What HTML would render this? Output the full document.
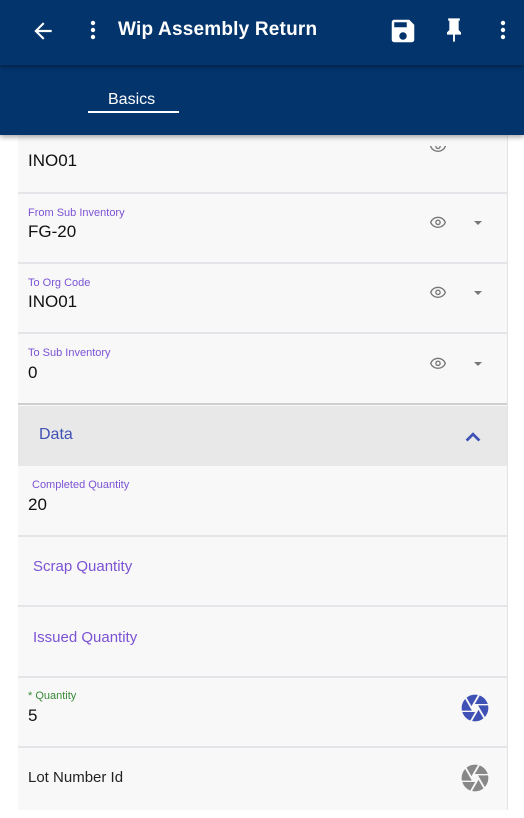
<!DOCTYPE html>
<html><head><style>
*{margin:0;padding:0;box-sizing:border-box}
body{width:524px;height:810px;overflow:hidden;background:#fff;font-family:"Liberation Sans",sans-serif;position:relative}
.top{position:absolute;left:0;top:0;width:524px;height:65px;background:#03346c;box-shadow:0 2px 4px rgba(0,0,0,.35);z-index:3}
.tabs{position:absolute;left:0;top:65px;width:524px;height:70px;background:#03346c;box-shadow:0 2px 5px rgba(0,0,0,.35);z-index:2}
.title{position:absolute;left:118px;top:19px;color:#fff;font-size:19px;font-weight:bold;letter-spacing:.2px}
.card{position:absolute;left:18px;top:135px;width:490px;height:675px;background:#f8f8f8;border-right:1px solid #e4e4e4}
.row{position:absolute;left:0;width:489px;border-bottom:2px solid #e3e5e8}
.lab{position:absolute;left:10px;font-size:11px;color:#7b52d4}
.val{position:absolute;left:10px;font-size:17px;color:#111}
.eye{position:absolute;left:410px}
.dd{position:absolute;left:456px;width:0;height:0;border-left:4px solid transparent;border-right:4px solid transparent;border-top:4px solid #777}
</style></head><body>
<div class="top">
<svg style="position:absolute;left:30px;top:18px" width="26" height="26" viewBox="0 0 24 24"><path d="M20 11H7.8l5.6-5.6L12 4l-8 8 8 8 1.4-1.4L7.8 13H20z" fill="#fff"/></svg>
<svg style="position:absolute;left:81px;top:18px" width="24" height="24" viewBox="0 0 24 24"><circle cx="12" cy="5" r="2.2" fill="#fff"/><circle cx="12" cy="12" r="2.2" fill="#fff"/><circle cx="12" cy="19" r="2.2" fill="#fff"/></svg>
<div class="title">Wip Assembly Return</div>
<svg style="position:absolute;left:388px;top:16px" width="30" height="30" viewBox="0 0 24 24"><path d="M17 3H5a2 2 0 0 0-2 2v14a2 2 0 0 0 2 2h14a2 2 0 0 0 2-2V7l-4-4zm-5 16a3 3 0 1 1 0-6 3 3 0 0 1 0 6zm3-10H5V5h10v4z" fill="#fff"/></svg>
<svg style="position:absolute;left:440px;top:15px" width="28" height="30" viewBox="0 0 24 24"><path d="M16 4v8l2 2v2h-5.2v6h-1.6v-6H6v-2l2-2V4H7V2h10v2z" fill="#fff"/></svg>
<svg style="position:absolute;left:491px;top:18px" width="24" height="24" viewBox="0 0 24 24"><circle cx="12" cy="5" r="2.2" fill="#fff"/><circle cx="12" cy="12" r="2.2" fill="#fff"/><circle cx="12" cy="19" r="2.2" fill="#fff"/></svg>
</div>
<div class="tabs">
<div style="position:absolute;left:108px;top:26px;color:#fff;font-size:16px">Basics</div>
<div style="position:absolute;left:88px;top:46px;width:91px;height:2px;background:#fff"></div>
</div>
<div class="card">
<div class="row" style="top:0;height:59px"><div class="val" style="top:16px">INO01</div>
<svg class="eye" style="top:3px" width="20" height="16" viewBox="0 0 24 24"><path d="M12 5C7 5 2.7 8.1 1 12.5c1.7 4.4 6 7.5 11 7.5s9.3-3.1 11-7.5C21.3 8.1 17 5 12 5z" fill="none" stroke="#777" stroke-width="2"/><circle cx="12" cy="12.5" r="3.2" fill="none" stroke="#777" stroke-width="2"/></svg>
<div style="position:absolute;left:400px;top:0;width:40px;height:11px;background:#f8f8f8"></div></div>
<div class="row" style="top:59px;height:70px"><div class="lab" style="top:13px">From Sub Inventory</div><div class="val" style="top:28px">FG-20</div>
<svg class="eye" style="top:20px" width="20" height="16" viewBox="0 0 24 24"><path d="M12 5C7 5 2.7 8.1 1 12.5c1.7 4.4 6 7.5 11 7.5s9.3-3.1 11-7.5C21.3 8.1 17 5 12 5z" fill="none" stroke="#777" stroke-width="2"/><circle cx="12" cy="12.5" r="3.2" fill="none" stroke="#777" stroke-width="2"/></svg><div class="dd" style="top:27px"></div></div>
<div class="row" style="top:129px;height:70px"><div class="lab" style="top:13px">To Org Code</div><div class="val" style="top:28px">INO01</div>
<svg class="eye" style="top:20px" width="20" height="16" viewBox="0 0 24 24"><path d="M12 5C7 5 2.7 8.1 1 12.5c1.7 4.4 6 7.5 11 7.5s9.3-3.1 11-7.5C21.3 8.1 17 5 12 5z" fill="none" stroke="#777" stroke-width="2"/><circle cx="12" cy="12.5" r="3.2" fill="none" stroke="#777" stroke-width="2"/></svg><div class="dd" style="top:27px"></div></div>
<div class="row" style="top:199px;height:71px;border-bottom:2px solid #cfcfcf"><div class="lab" style="top:13px">To Sub Inventory</div><div class="val" style="top:29px">0</div>
<svg class="eye" style="top:21px" width="20" height="16" viewBox="0 0 24 24"><path d="M12 5C7 5 2.7 8.1 1 12.5c1.7 4.4 6 7.5 11 7.5s9.3-3.1 11-7.5C21.3 8.1 17 5 12 5z" fill="none" stroke="#777" stroke-width="2"/><circle cx="12" cy="12.5" r="3.2" fill="none" stroke="#777" stroke-width="2"/></svg><div class="dd" style="top:28px"></div></div>
<div style="position:absolute;left:0;top:271px;width:489px;height:60px;background:#e8e8e8">
<div style="position:absolute;left:21px;top:20px;font-size:16px;color:#3f51b5">Data</div>
<svg style="position:absolute;left:444px;top:22px" width="22" height="16" viewBox="0 0 24 16"><path d="M5 13l7-7 7 7" fill="none" stroke="#3f51b5" stroke-width="3"/></svg></div>
<div class="row" style="top:331px;height:71px"><div class="lab" style="top:13px;left:14px">Completed Quantity</div><div class="val" style="top:29px">20</div></div>
<div class="row" style="top:402px;height:70px"><div style="position:absolute;left:15px;top:21px;font-size:15px;color:#7b52d4">Scrap Quantity</div></div>
<div class="row" style="top:472px;height:71px"><div style="position:absolute;left:15px;top:22px;font-size:15px;color:#7b52d4">Issued Quantity</div></div>
<div class="row" style="top:543px;height:70px"><div class="lab" style="top:12px;color:#3a8a3a">* Quantity</div><div class="val" style="top:28px">5</div>
<svg style="position:absolute;left:441px;top:14px" width="32" height="32" viewBox="0 0 24 24"><path fill="#3f51b5" d="M9.4 10.5l4.77-8.26C13.47 2.09 12.75 2 12 2c-2.4 0-4.6.85-6.32 2.25l3.66 6.35.06-.1zM21.54 9c-.92-2.92-3.15-5.26-6-6.34L11.88 9h9.66zm.26 1h-7.49l.29.5 4.76 8.25C21 16.97 22 14.61 22 12c0-.69-.07-1.35-.2-2zM8.54 12l-3.9-6.75C3.01 7.03 2 9.39 2 12c0 .69.07 1.350.2 2h7.49l-1.15-2zm-6.08 3c.92 2.92 3.150 5.26 6 6.34L12.12 15H2.46zm11.27 0l-3.9 6.76c.7.15 1.42.24 2.17.24 2.4 0 4.6-.85 6.32-2.25l-3.66-6.35-.93 1.6z"/></svg></div>
<div class="row" style="top:613px;height:70px;border:none"><div style="position:absolute;left:10px;top:21px;font-size:15px;color:#222">Lot Number Id</div>
<svg style="position:absolute;left:441px;top:14px" width="32" height="32" viewBox="0 0 24 24"><path fill="#888" d="M9.4 10.5l4.77-8.26C13.47 2.09 12.75 2 12 2c-2.4 0-4.6.85-6.32 2.25l3.66 6.35.06-.1zM21.54 9c-.92-2.92-3.15-5.26-6-6.34L11.88 9h9.66zm.26 1h-7.49l.29.5 4.76 8.25C21 16.970 22 14.61 22 12c0-.69-.07-1.35-.2-2zM8.54 12l-3.9-6.75C3.01 7.03 2 9.39 2 12c0 .69.07 1.35.2 2h7.49l-1.15-2zm-6.08 3c.92 2.92 3.15 5.26 6 6.34L12.12 15H2.46zm11.27 0l-3.9 6.76c.7.15 1.42.24 2.17.24 2.4 0 4.6-.85 6.32-2.25l-3.66-6.35-.93 1.6z"/></svg></div>
</div>
</body></html>
